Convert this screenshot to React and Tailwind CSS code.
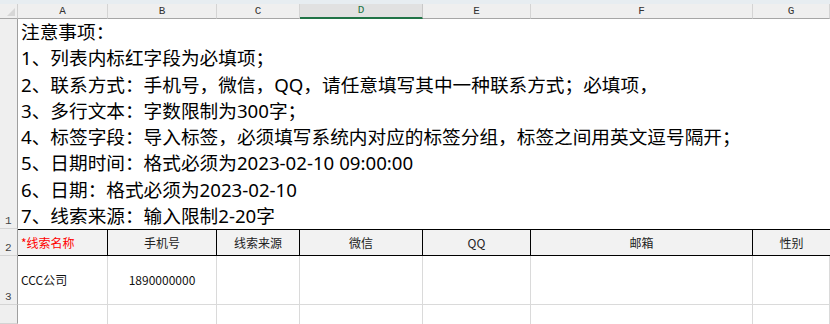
const COLS = [
  { key: "A", w: "w-[90px]" },
  { key: "B", w: "w-[109px]" },
  { key: "C", w: "w-[83px]" },
  { key: "D", w: "w-[123px]" },
  { key: "E", w: "w-[108px]" },
  { key: "F", w: "w-[222px]" },
  { key: "G", w: "flex-1" },
];

const NOTES = [
  "注意事项：",
  "1、列表内标红字段为必填项；",
  "2、联系方式：手机号，微信，QQ，请任意填写其中一种联系方式；必填项，",
  "3、多行文本：字数限制为300字；",
  "4、标签字段：导入标签，必须填写系统内对应的标签分组，标签之间用英文逗号隔开；",
  "5、日期时间：格式必须为2023-02-10 09:00:00",
  "6、日期：格式必须为2023-02-10",
  "7、线索来源：输入限制2-20字",
];

const HEADERS = ["*线索名称", "手机号", "线索来源", "微信", "QQ", "邮箱", "性别"];

const mono = { fontFamily: '"Liberation Mono", "DejaVu Sans Mono", monospace' };

const RowHead = ({ n, h }) => (
  <div
    className={`w-[18px] shrink-0 ${h} bg-[#efefef] border-r border-b border-r-[#9f9f9f] border-b-[#d4d4d4] flex items-end pl-[5px] pb-[1px] text-[11px] leading-none text-[#444]`}
    style={mono}
  >
    {n}
  </div>
);

export default function App() {
  return (
    <div
      className="w-[830px] h-[324px] overflow-hidden bg-white flex flex-col"
      style={{ fontFamily: '"Noto Sans CJK SC", "Noto Sans", sans-serif' }}
    >
      <div className="h-[4px] bg-[#e7edf1] shrink-0" />

      {/* column letters */}
      <div className="flex h-[15px] shrink-0">
        <div className="w-[18px] shrink-0 bg-[#efefef] border-r border-b border-r-[#d0d0d0] border-b-[#a6a6a6] relative">
          <svg className="absolute right-[2px] bottom-[2px]" width="8" height="8" viewBox="0 0 8 8">
            <polygon points="8,0 8,8 0,8" fill="#d6d6d6" />
          </svg>
        </div>
        {COLS.map((c) =>
          c.key === "D" ? (
            <div
              key={c.key}
              className={`${c.w} shrink-0 bg-[#e1e1e1] border-r border-r-[#c8c8c8] border-b-2 border-b-[#217346] flex items-center justify-center text-[11px] leading-none text-[#217346]`}
              style={mono}
            >
              {c.key}
            </div>
          ) : (
            <div
              key={c.key}
              className={`${c.w} ${c.key === "G" ? "" : "shrink-0"} bg-[#efefef] border-r border-b border-r-[#d4d4d4] border-b-[#a6a6a6] flex items-center justify-center text-[11px] leading-none text-[#333]`}
              style={mono}
            >
              {c.key}
            </div>
          )
        )}
      </div>

      {/* row 1: merged notes */}
      <div className="flex h-[210px] shrink-0">
        <RowHead n="1" h="h-[210px]" />
        <div
          className="flex-1 pl-[3px] text-[18.67px] leading-[26.3px] text-black whitespace-nowrap overflow-hidden"
          style={{ fontFamily: '"Noto Sans", "Noto Sans CJK SC", sans-serif' }}
        >
          {NOTES.map((t) => (
            <div key={t}>{t}</div>
          ))}
        </div>
      </div>

      {/* row 2: table header */}
      <div className="flex h-[27px] shrink-0">
        <RowHead n="2" h="h-[27px]" />
        {COLS.map((c, i) => (
          <div
            key={c.key}
            className={`${c.w} ${c.key === "G" ? "" : "shrink-0"} bg-[#f2f2f2] border-t border-b border-black ${
              i < COLS.length - 1 ? "border-r" : ""
            } flex items-center text-[12px] ${
              i === 0 ? "pl-[3px] text-[#ff0000]" : "justify-center text-[#222]"
            }`}
          >
            {HEADERS[i]}
          </div>
        ))}
      </div>

      {/* row 3: sample data */}
      <div className="flex h-[49px] shrink-0">
        <RowHead n="3" h="h-[49px]" />
        {COLS.map((c, i) => (
          <div
            key={c.key}
            className={`${c.w} ${c.key === "G" ? "" : "shrink-0"} border-r border-b border-[#dadada] flex items-center text-[12px] text-[#111] ${
              i === 1 ? "justify-center" : "pl-[3px]"
            }`}
          >
            {i === 0 ? "CCC公司" : i === 1 ? "1890000000" : ""}
          </div>
        ))}
      </div>

      {/* row 4: empty */}
      <div className="flex flex-1">
        <RowHead n="" h="h-full" />
        {COLS.map((c) => (
          <div
            key={c.key}
            className={`${c.w} ${c.key === "G" ? "" : "shrink-0"} border-r border-[#dadada]`}
          />
        ))}
      </div>
    </div>
  );
}
